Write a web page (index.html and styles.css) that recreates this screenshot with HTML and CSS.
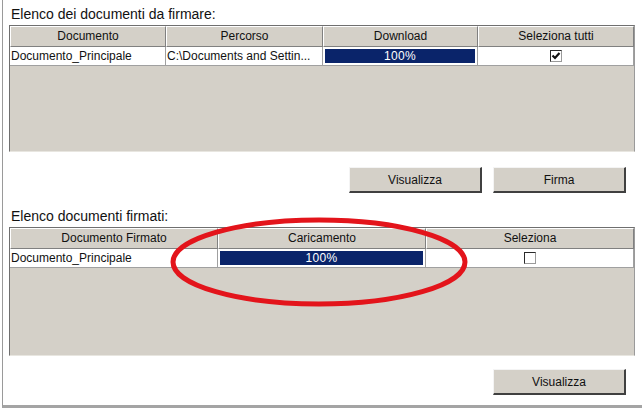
FILE: index.html
```html
<!DOCTYPE html>
<html lang="it">
<head>
<meta charset="utf-8">
<title>Firma documenti</title>
<link rel="stylesheet" href="styles.css">
</head>
<body>
<div class="frame">
  <div class="title">Elenco dei documenti da firmare:</div>
  <div class="grid grid-4">
    <div class="hcell">Documento</div>
    <div class="hcell">Percorso</div>
    <div class="hcell">Download</div>
    <div class="hcell">Seleziona tutti</div>
    <div class="dcell">Documento_Principale</div>
    <div class="dcell">C:\Documents and Settin...</div>
    <div class="dcell pcell"><div class="bar">100%</div></div>
    <div class="dcell ccell"><span class="check"><svg width="10" height="10" viewBox="0 0 10 10"><path d="M1.5 4.5 L4 7 L8.5 2" fill="none" stroke="#111" stroke-width="2.2"/></svg></span></div>
  </div>
  <div class="actions">
    <button class="btn">Visualizza</button>
    <button class="btn">Firma</button>
  </div>
  <div class="title title2">Elenco documenti firmati:</div>
  <div class="grid grid-3">
    <div class="hcell">Documento Firmato</div>
    <div class="hcell">Caricamento</div>
    <div class="hcell">Seleziona</div>
    <div class="dcell">Documento_Principale</div>
    <div class="dcell pcell"><div class="bar">100%</div></div>
    <div class="dcell ccell"><span class="check"></span></div>
  </div>
  <div class="actions actions2">
    <button class="btn">Visualizza</button>
  </div>
</div>
<svg class="mark" width="642" height="414" viewBox="0 0 642 414">
  <ellipse cx="319" cy="262" rx="146" ry="42" fill="none" stroke="#e3141b" stroke-width="5"/>
</svg>
</body>
</html>
```
FILE: styles.css
```css
html, body {
  margin: 0;
  padding: 0;
  background: #ffffff;
}
body {
  position: relative;
  width: 642px;
  height: 414px;
  overflow: hidden;
  font-family: "Liberation Sans", Arial, sans-serif;
  color: #111111;
}
.frame {
  margin-left: 2px;
  width: 640px;
  height: 408px;
  box-sizing: border-box;
  border-left: 1px solid #9a9a9a;
  border-bottom: 3px solid #a4a4a4;
  padding-left: 6px;
}
.title {
  font-size: 14px;
  line-height: 16px;
  padding-top: 6px;
  margin-bottom: 3px;
  padding-left: 2px;
}
.title2 {
  padding-top: 15px;
}
.grid {
  display: grid;
  width: 626px;
  box-sizing: border-box;
  background: #d4d0c8;
  border: 1px solid #6f6f6f;
  border-right-color: #9a9a9a;
  border-bottom-color: #e8e6e0;
  align-content: start;
}
.grid-4 {
  height: 127px;
  grid-template-columns: 156px 157px 155px 1fr;
  grid-template-rows: 21px 19px;
}
.grid-3 {
  height: 129px;
  grid-template-columns: 208px 208px 1fr;
  grid-template-rows: 21px 19px;
}
.hcell {
  background: #d4d0c8;
  border-top: 1px solid #ffffff;
  border-left: 1px solid #ffffff;
  border-right: 1px solid #808080;
  border-bottom: 1px solid #808080;
  font-size: 12px;
  line-height: 19px;
  text-align: center;
  white-space: nowrap;
  overflow: hidden;
}
.dcell {
  background: #ffffff;
  border-right: 1px solid #a0a0a0;
  border-bottom: 1px solid #a0a0a0;
  font-size: 12px;
  line-height: 18px;
  padding-left: 1px;
  white-space: nowrap;
  overflow: hidden;
}
.pcell {
  padding: 2px 2px 2px 2px;
  box-sizing: border-box;
}
.bar {
  height: 14px;
  background: #0a246a;
  color: #ffffff;
  font-size: 12px;
  letter-spacing: 0.3px;
  line-height: 14px;
  text-align: center;
}
.ccell {
  display: flex;
  justify-content: center;
  align-items: center;
}
.check {
  width: 12px;
  height: 12px;
  box-sizing: border-box;
  border: 1px solid #2a2a2a;
  border-right-color: #9a9a9a;
  border-bottom-color: #9a9a9a;
  background: #ffffff;
  display: flex;
  align-items: center;
  justify-content: center;
}
.actions {
  display: flex;
  justify-content: flex-end;
  gap: 11px;
  width: 617px;
  margin-top: 15px;
}
.actions2 {
  margin-top: 13px;
}
.btn {
  width: 133px;
  height: 26px;
  box-sizing: border-box;
  background: #d4d0c8;
  border-top: 1px solid #f4f4f4;
  border-left: 1px solid #f4f4f4;
  border-right: 2px solid #404040;
  border-bottom: 2px solid #404040;
  font-family: "Liberation Sans", Arial, sans-serif;
  font-size: 12px;
  color: #111111;
  padding: 0;
}
.mark {
  position: absolute;
  left: 0;
  top: 0;
  pointer-events: none;
}
```
